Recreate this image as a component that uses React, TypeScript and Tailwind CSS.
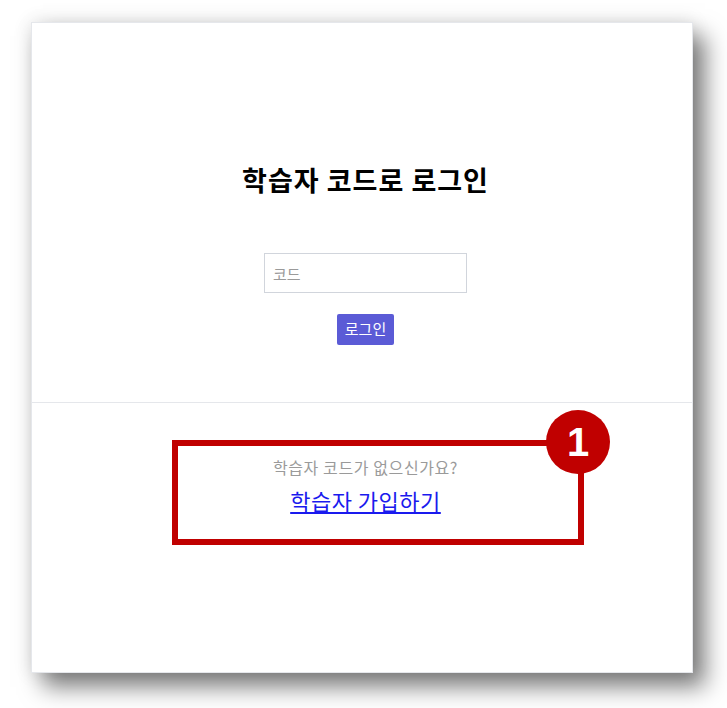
const App = () => {
  return (
    <div
      className="min-h-screen bg-white pt-[22px] pl-[31px]"
      style={{ fontFamily: '"Noto Sans CJK KR", "Noto Sans", sans-serif' }}
    >
      <div className="relative w-[662px] h-[651px] bg-white border border-gray-200 shadow-[12px_14px_22px_rgba(0,0,0,0.5),0_0_18px_rgba(0,0,0,0.12)]">
        {/* login form */}
        <div className="h-[380px] pl-[7px] border-b border-gray-200 flex flex-col items-center pt-[137px]">
          <h1 className="text-[27px] leading-[40px] font-bold tracking-[1px] text-black">
            학습자 코드로 로그인
          </h1>
          <input
            type="text"
            placeholder="코드"
            className="mt-[53px] w-[203px] h-[40px] px-2 border border-gray-300 text-[15px] placeholder:text-[#9a9a9a] outline-none"
          />
          <button className="mt-[21px] w-[57px] h-[31px] bg-[#5b5bd6] text-white text-[15px] rounded-[2px]">
            로그인
          </button>
        </div>

        {/* signup */}
        <div className="pl-[7px] flex flex-col items-center pt-[52px]">
          <p className="text-[16px] leading-6 tracking-[0.6px] text-[#9a9a9a]">학습자 코드가 없으신가요?</p>
          <a href="#" className="mt-[7px] text-[22px] leading-7 tracking-[0.5px] text-[#1a1aee] underline">
            학습자 가입하기
          </a>
        </div>

        {/* annotation */}
        <div className="absolute left-[140px] top-[417px] w-[412px] h-[105px] border-[6px] border-[#c00000]" />
        <div className="absolute left-[514px] top-[387px] w-[64px] h-[64px] rounded-full bg-[#c00000] flex items-center justify-center">
          <span
            className="text-white text-[40px] font-bold leading-none"
            style={{ fontFamily: '"Liberation Sans", Arial, sans-serif' }}
          >
            1
          </span>
        </div>
      </div>
    </div>
  );
};

export default App;
